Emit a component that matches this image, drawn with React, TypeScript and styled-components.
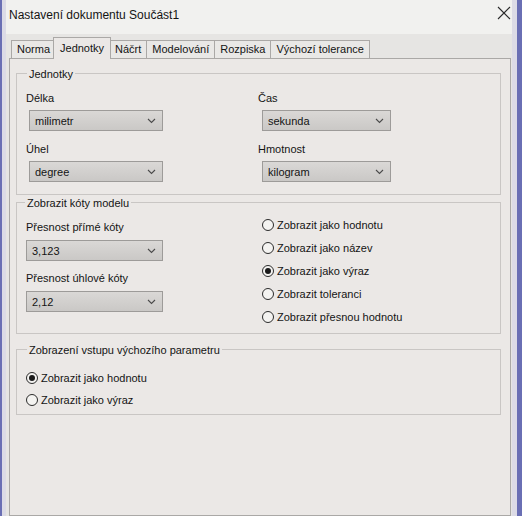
import React from "react";
import styled, { createGlobalStyle } from "styled-components";

const Global = createGlobalStyle`
  html, body { margin: 0; padding: 0; background: #ebe8e6; }
  * { box-sizing: border-box; }
`;

const Window = styled.div`
  width: 522px;
  height: 516px;
  overflow: hidden;
  border-left: 2px solid #6a6fb4;
  border-right: 5px solid #6a6fb4;
  font-family: "Liberation Sans", Arial, sans-serif;
  font-size: 11px;
  color: #141414;
`;

const Frame = styled.div`
  height: 100%;
  display: flex;
  flex-direction: column;
  border-left: 4px solid #dcdbe6;
  border-right: 5px solid #dcdbe6;
`;

const TitleBar = styled.div`
  height: 34px;
  flex: none;
  display: flex;
  justify-content: space-between;
  align-items: flex-start;
  padding: 8px 0 0 3px;
  background: #f1f1ef;
  font-size: 12px;
  line-height: 14px;
`;

const CloseBox = styled.div`
  width: 16px;
  height: 16px;
  margin-top: -3px;
  display: flex;
  align-items: center;
  justify-content: center;
`;

const Body = styled.div`
  flex: 1;
  display: flex;
  flex-direction: column;
  padding: 3px 1px 0 3px;
  background: #e6e5e3;
`;

const TabRow = styled.div`
  height: 21px;
  display: flex;
  align-items: flex-end;
  padding-left: 2px;
`;

const Tab = styled.div<{ $active?: boolean }>`
  position: relative;
  height: ${(p) => (p.$active ? 22 : 18)}px;
  margin: 0 ${(p) => (p.$active ? -2 : -1)}px ${(p) => (p.$active ? -1 : 0)}px ${(p) => (p.$active ? -2 : 0)}px;
  padding: ${(p) => (p.$active ? "2px 6px 0" : "0 5px")};
  z-index: ${(p) => (p.$active ? 2 : 1)};
  border: 1px solid #aaa8a6;
  border-bottom: none;
  background: ${(p) => (p.$active ? "#ebe8e6" : "#e9e8e6")};
  line-height: 17px;
  white-space: nowrap;
`;

const Panel = styled.div`
  flex: 1;
  border: 1px solid #aaa8a6;
  background: #ebe8e6;
  padding: 9px 9px 0 6px;
`;

const LINE = "#c9c6c4";

const GroupWrap = styled.section<{ $gap: number }>`
  margin-top: ${(p) => p.$gap}px;
`;

const GroupHead = styled.div<{ $lead: number }>`
  display: flex;
  align-items: flex-end;
  height: 13px;
  &::before,
  &::after {
    content: "";
    height: 7px;
    border-top: 1px solid ${LINE};
  }
  &::before {
    width: ${(p) => p.$lead}px;
    border-left: 1px solid ${LINE};
  }
  &::after {
    flex: 1;
    border-right: 1px solid ${LINE};
  }
`;

const GroupTitle = styled.span`
  align-self: flex-start;
  padding: 0 2px;
  line-height: 13px;
  white-space: nowrap;
`;

const GroupBody = styled.div<{ $pad: string }>`
  padding: ${(p) => p.$pad};
  border: 1px solid ${LINE};
  border-top: none;
`;

const Group = ({
  title,
  lead,
  gap = 0,
  pad,
  children,
}: {
  title: string;
  lead: number;
  gap?: number;
  pad: string;
  children: React.ReactNode;
}) => (
  <GroupWrap $gap={gap}>
    <GroupHead $lead={lead}>
      <GroupTitle>{title}</GroupTitle>
    </GroupHead>
    <GroupBody $pad={pad}>{children}</GroupBody>
  </GroupWrap>
);

const FieldGrid = styled.div<{ $cols: string }>`
  display: grid;
  grid-template-columns: ${(p) => p.$cols};
  row-gap: 11px;
  padding-top: 10px;
`;

const Field = styled.div<{ $indent: number; $gap: number }>`
  display: flex;
  flex-direction: column;
  gap: ${(p) => p.$gap}px;
  padding-left: ${(p) => p.$indent}px;
`;

const Column = styled.div`
  display: flex;
  flex-direction: column;
  row-gap: 10px;
  padding-top: 10px;
`;

const Label = styled.div<{ $shift?: number }>`
  line-height: 14px;
  margin-left: ${(p) => -(p.$shift ?? 0)}px;
  white-space: nowrap;
`;

const SelectBox = styled.div<{ $w: number }>`
  width: ${(p) => p.$w}px;
  height: 21px;
  display: flex;
  align-items: center;
  justify-content: space-between;
  padding: 0 6px 0 5px;
  border: 1px solid #9d9b99;
  background: linear-gradient(#dad8d6, #cac8c6);
`;

const Split = styled.div`
  display: grid;
  grid-template-columns: 236px 1fr;
`;

const RadioList = styled.div<{ $row: number; $top: number }>`
  display: flex;
  flex-direction: column;
  padding-top: ${(p) => p.$top}px;
  & > label { height: ${(p) => p.$row}px; }
`;

const RadioRow = styled.label`
  display: flex;
  align-items: center;
  gap: 3px;
  white-space: nowrap;
`;

const Circle = styled.span<{ $on?: boolean }>`
  width: 12px;
  height: 12px;
  flex: none;
  border-radius: 50%;
  border: 1px solid #2b2b2b;
  background: #f4f3f1;
  display: flex;
  align-items: center;
  justify-content: center;
  &::after {
    content: "";
    width: 6px;
    height: 6px;
    border-radius: 50%;
    background: ${(p) => (p.$on ? "#1a1a1a" : "transparent")};
  }
`;

const Chevron = () => (
  <svg width="9" height="6" viewBox="0 0 9 6">
    <path d="M1 1 L4.5 4.5 L8 1" fill="none" stroke="#4a4a4a" strokeWidth="1.1" />
  </svg>
);

const Select = ({ value, w }: { value: string; w: number }) => (
  <SelectBox $w={w}>
    <span>{value}</span>
    <Chevron />
  </SelectBox>
);

const Radio = ({ text, on }: { text: string; on?: boolean }) => (
  <RadioRow>
    <Circle $on={on} />
    <span>{text}</span>
  </RadioRow>
);

const tabs = ["Norma", "Jednotky", "Náčrt", "Modelování", "Rozpiska", "Výchozí tolerance"];

export default function App() {
  return (
    <>
      <Global />
      <Window>
        <Frame>
          <TitleBar>
            <span>Nastavení dokumentu Součást1</span>
            <CloseBox>
              <svg width="14" height="14" viewBox="0 0 14 14">
                <path d="M1 1 L13 13 M13 1 L1 13" stroke="#2a2a2a" strokeWidth="1.1" />
              </svg>
            </CloseBox>
          </TitleBar>
          <Body>
            <TabRow>
              {tabs.map((t) => (
                <Tab key={t} $active={t === "Jednotky"}>
                  {t}
                </Tab>
              ))}
            </TabRow>
            <Panel>
              <Group title="Jednotky" lead={10} pad="0 10px 12px 9px">
                <FieldGrid $cols="232px 1fr">
                  <Field $indent={3} $gap={5}>
                    <Label $shift={3}>Délka</Label>
                    <Select value="milimetr" w={134} />
                  </Field>
                  <Field $indent={4} $gap={5}>
                    <Label $shift={4}>Čas</Label>
                    <Select value="sekunda" w={129} />
                  </Field>
                  <Field $indent={3} $gap={5}>
                    <Label $shift={3}>Úhel</Label>
                    <Select value="degree" w={134} />
                  </Field>
                  <Field $indent={4} $gap={5}>
                    <Label $shift={4}>Hmotnost</Label>
                    <Select value="kilogram" w={129} />
                  </Field>
                </FieldGrid>
              </Group>

              <Group title="Zobrazit kóty modelu" lead={8} gap={2} pad="0 10px 5px 9px">
                <Split>
                  <Column>
                    <Field $indent={0} $gap={6}>
                      <Label>Přesnost přímé kóty</Label>
                      <Select value="3,123" w={137} />
                    </Field>
                    <Field $indent={0} $gap={6}>
                      <Label>Přesnost úhlové kóty</Label>
                      <Select value="2,12" w={137} />
                    </Field>
                  </Column>
                  <RadioList $row={23} $top={3}>
                    <Radio text="Zobrazit jako hodnotu" />
                    <Radio text="Zobrazit jako název" />
                    <Radio text="Zobrazit jako výraz" on />
                    <Radio text="Zobrazit toleranci" />
                    <Radio text="Zobrazit přesnou hodnotu" />
                  </RadioList>
                </Split>
              </Group>

              <Group title="Zobrazení vstupu výchozího parametru" lead={10} gap={10} pad="0 10px 3px 9px">
                <RadioList $row={22} $top={10}>
                  <Radio text="Zobrazit jako hodnotu" on />
                  <Radio text="Zobrazit jako výraz" />
                </RadioList>
              </Group>
            </Panel>
          </Body>
        </Frame>
      </Window>
    </>
  );
}
